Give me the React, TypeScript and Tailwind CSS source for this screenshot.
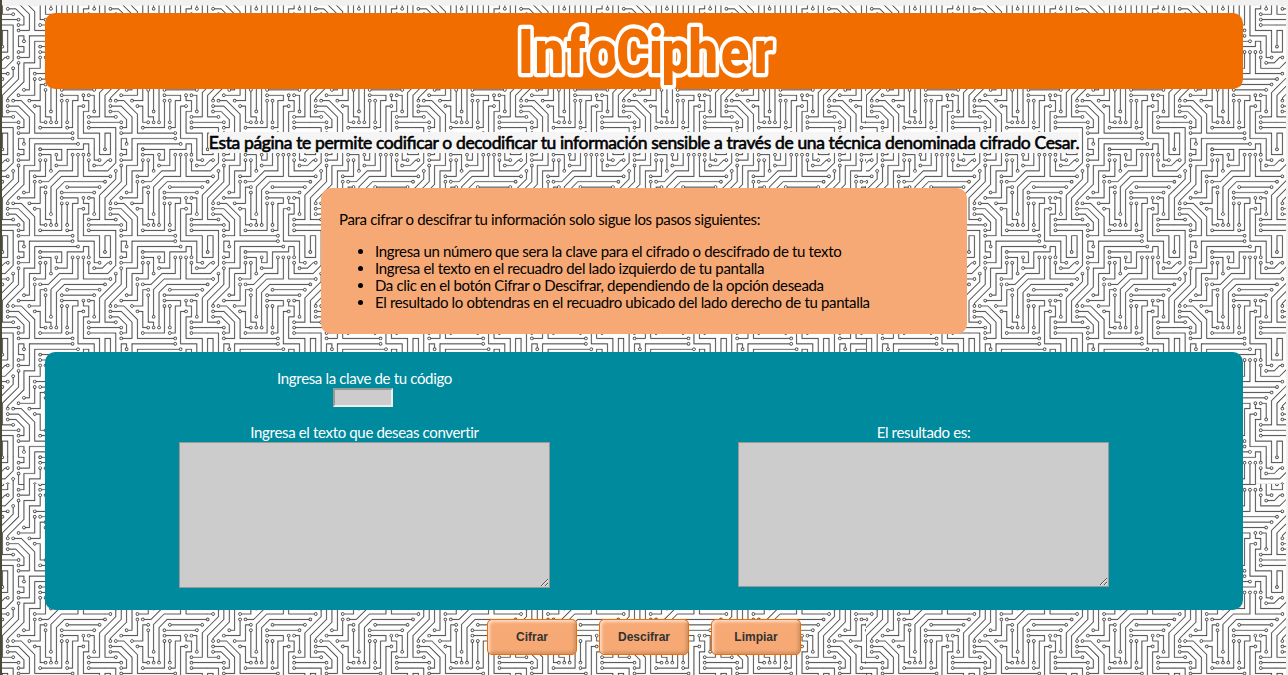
const TRACES = "M44.1 224a5 5 0 1 1 0 2H0v-2h44.1zm160 48a5 5 0 1 1 0 2H82v-2h122.1zm57.8-46a5 5 0 1 1 0-2H304v2h-42.1zm0 16a5 5 0 1 1 0-2H304v2h-42.1zm6.2-114a5 5 0 1 1 0 2h-86.2a5 5 0 1 1 0-2h86.2zm-256-48a5 5 0 1 1 0 2H0v-2h12.1zm185.8 34a5 5 0 1 1 0-2h86.2a5 5 0 1 1 0 2h-86.2zM258 12.1a5 5 0 1 1-2 0V0h2v12.1zm-64 208a5 5 0 1 1-2 0v-54.2a5 5 0 1 1 2 0v54.2zm48-198.2V80h62v2h-64V21.9a5 5 0 1 1 2 0zm16 16V64h46v2h-48V37.9a5 5 0 1 1 2 0zm-128 96V208h16v12.1a5 5 0 1 1-2 0V210h-16v-76.1a5 5 0 1 1 2 0zm-5.9-21.9a5 5 0 1 1 0 2H114v48H85.9a5 5 0 1 1 0-2H112v-48h12.1zm-6.2 130a5 5 0 1 1 0-2H176v-74.1a5 5 0 1 1 2 0V242h-60.1zm-16-64a5 5 0 1 1 0-2H114v48h10.1a5 5 0 1 1 0 2H112v-48h-10.1zM66 284.1a5 5 0 1 1-2 0V274H50v30h-2v-32h18v12.1zM236.1 176a5 5 0 1 1 0 2H226v94h48v32h-2v-30h-48v-98h12.1zm25.8-30a5 5 0 1 1 0-2H274v44.1a5 5 0 1 1-2 0V146h-10.1zm-64 96a5 5 0 1 1 0-2H208v-80h16v-14h-42.1a5 5 0 1 1 0-2H226v18h-16v80h-12.1zm86.2-210a5 5 0 1 1 0 2H272V0h2v32h10.1zM98 101.9V146H53.9a5 5 0 1 1 0-2H96v-42.1a5 5 0 1 1 2 0zM53.9 34a5 5 0 1 1 0-2H80V0h2v34H53.9zm60.1 3.9V66H82v64H69.9a5 5 0 1 1 0-2H80V64h32V37.9a5 5 0 1 1 2 0zM101.9 82a5 5 0 1 1 0-2H128V37.9a5 5 0 1 1 2 0V82h-28.1zm16-64a5 5 0 1 1 0-2H146v44.1a5 5 0 1 1-2 0V18h-26.1zm102.2 270a5 5 0 1 1 0 2H98v14h-2v-16h124.1zM242 149.9V160h16v34h-16v62h48v48h-2v-46h-48v-66h16v-30h-16v-12.1a5 5 0 1 1 2 0zM53.9 18a5 5 0 1 1 0-2H64V2H48V0h18v18H53.9zm112 32a5 5 0 1 1 0-2H192V0h50v2h-48v48h-28.1zm-48-48a5 5 0 0 1-9.8-2h2.07a3 3 0 1 0 5.66 0H178v34h-18V21.9a5 5 0 1 1 2 0V32h14V2h-58.1zm0 96a5 5 0 1 1 0-2H137l32-32h39V21.9a5 5 0 1 1 2 0V66h-40.17l-32 32H117.9zm28.1 90.1a5 5 0 1 1-2 0v-76.51L175.59 80H224V21.9a5 5 0 1 1 2 0V82h-49.59L146 112.41v75.69zm16 32a5 5 0 1 1-2 0v-99.51L184.59 96H300.1a5 5 0 0 1 3.9-3.9v2.07a3 3 0 0 0 0 5.66v2.07a5 5 0 0 1-3.9-3.9H185.41L162 121.41v98.69zm-144-64a5 5 0 1 1-2 0v-3.51l48-48V48h32V0h2v50H66v55.41l-48 48v2.69zM50 53.9v43.51l-48 48V208h26.1a5 5 0 1 1 0 2H0v-65.41l48-48V53.9a5 5 0 1 1 2 0zm-16 16V89.41l-34 34v-2.82l32-32V69.9a5 5 0 1 1 2 0zM12.1 32a5 5 0 1 1 0 2H9.41L0 43.41V40.6L8.59 32h3.51zm265.8 18a5 5 0 1 1 0-2h18.69l7.41-7.41v2.82L297.41 50H277.9zm-16 160a5 5 0 1 1 0-2H288v-71.41l16-16v2.82l-14 14V210h-28.1zm-208 32a5 5 0 1 1 0-2H64v-22.59L40.59 194H21.9a5 5 0 1 1 0-2H41.41L66 216.59V242H53.9zm150.2 14a5 5 0 1 1 0 2H96v-56.6L56.6 162H37.9a5 5 0 1 1 0-2h19.5L98 200.6V256h106.1zm-150.2 2a5 5 0 1 1 0-2H80v-46.59L48.59 178H21.9a5 5 0 1 1 0-2H49.41L82 208.59V258H53.9zM34 39.8v1.61L9.41 66H0v-2h8.59L32 40.59V0h2v39.8zM2 300.1a5 5 0 0 1 3.9 3.9H3.83A3 3 0 0 0 0 302.17V256h18v48h-2v-46H2v42.1zM34 241v63h-2v-62H0v-2h34v1zM17 18H0v-2h16V0h2v18h-1zm273-2h14v2h-16V0h2v16zm-32 273v15h-2v-14h-14v14h-2v-16h18v1zM0 92.1A5.02 5.02 0 0 1 6 97a5 5 0 0 1-6 4.9v-2.07a3 3 0 1 0 0-5.66V92.1zM80 272h2v32h-2v-32zm37.9 32h-2.07a3 3 0 0 0-5.66 0h-2.07a5 5 0 0 1 9.8 0zM5.9 0A5.02 5.02 0 0 1 0 5.9V3.83A3 3 0 0 0 3.83 0H5.9zm294.2 0h2.07A3 3 0 0 0 304 3.83V5.9a5 5 0 0 1-3.9-5.9zm3.9 300.1v2.07a3 3 0 0 0-1.83 1.83h-2.07a5 5 0 0 1 3.9-3.9z";

const PADS: [number, number][] = [
  [49, 225], [209, 273], [257, 225], [257, 241], [273, 129], [177, 129], [17, 81], [193, 113], [289, 113],
  [257, 17], [193, 225], [193, 161], [241, 17], [257, 33], [129, 129], [145, 225], [129, 113], [81, 161],
  [113, 241], [177, 161], [97, 177], [129, 225], [65, 289], [241, 177], [257, 145], [273, 193], [193, 241],
  [177, 145], [289, 33], [97, 97], [49, 145], [49, 33], [113, 33], [65, 129], [97, 81], [129, 33], [113, 17],
  [145, 65], [225, 289], [241, 145], [49, 17], [161, 49], [161, 17], [113, 97], [209, 17], [145, 193],
  [225, 17], [161, 225], [17, 161], [49, 49], [33, 209], [33, 65], [17, 33], [273, 49], [257, 209],
  [49, 241], [17, 193], [209, 257], [33, 161], [49, 257], [17, 177],
];

const SCALE = 0.3377;
const PERIOD = 304 * SCALE;

type Region = { id: string; x: number; y: number; w: number; h: number; originY: number };

const REGIONS: Region[] = [
  { id: "nw", x: 2, y: 5.5, w: 864, h: 478.5, originY: 46.3 - PERIOD },
  { id: "ne", x: 866, y: 5.5, w: 420, h: 478.5, originY: 46.3 - PERIOD },
  { id: "sw", x: 2, y: 484, w: 864, h: 191, originY: 484 },
  { id: "se", x: 866, y: 484, w: 420, h: 191, originY: 484 },
];

function CircuitRegion({ id, x, y, w, h, originY }: Region) {
  const cols = Math.ceil(w / PERIOD);
  const rows = Math.ceil((y + h - originY) / PERIOD);
  return (
    <g clipPath={`url(#clip-${id})`}>
      <clipPath id={`clip-${id}`}>
        <rect x={x} y={y} width={w} height={h} />
      </clipPath>
      <rect x={x} y={y} width={w} height={h} fill="#fefefe" />
      {Array.from({ length: cols * rows }, (_, i) => (
        <use
          key={i}
          href="#circuit"
          transform={`translate(${x + (i % cols) * PERIOD} ${originY + Math.floor(i / cols) * PERIOD}) scale(${SCALE})`}
        />
      ))}
    </g>
  );
}

function Backdrop() {
  return (
    <svg className="absolute inset-0 -z-10" width="1288" height="675" aria-hidden="true">
      <defs>
        <g id="circuit">
          <path d={TRACES} fill="#3a3a3a" stroke="#3a3a3a" strokeWidth="0.6" />
          {PADS.map(([cx, cy]) => (
            <circle key={`${cx}-${cy}`} cx={cx} cy={cy} r="3" fill="#fff" />
          ))}
        </g>
      </defs>
      <rect width="1288" height="675" fill="#f2f1f0" />
      {REGIONS.map((r) => (
        <CircuitRegion key={r.id} {...r} />
      ))}
      <rect width="2" height="675" fill="#4b4839" />
    </svg>
  );
}

function ActionButton({ label }: { label: string }) {
  return (
    <button className="h-9 w-[90px] rounded-[5px] border border-[#f26d00] bg-[#f6a975] font-['Liberation_Sans',sans-serif] text-[12px] font-bold tracking-normal text-[#333] shadow-[inset_2px_2px_3px_rgba(255,255,255,0.6),inset_-2px_-2px_3px_rgba(0,0,0,0.15)]">
      {label}
    </button>
  );
}

const steps = [
  "Ingresa un número que sera la clave para el cifrado o descifrado de tu texto",
  "Ingresa el texto en el recuadro del lado izquierdo de tu pantalla",
  "Da clic en el botón Cifrar o Descifrar, dependiendo de la opción deseada",
  "El resultado lo obtendras en el recuadro ubicado del lado derecho de tu pantalla",
];

export default function App() {
  return (
    <div className="relative isolate flex h-[675px] w-[1288px] flex-col items-center overflow-hidden pt-[13px] font-[Lato,sans-serif] text-[15px] leading-[17px] tracking-[-0.34px] text-black">
      <Backdrop />
      <header className="flex h-[76px] w-[1198px] shrink-0 justify-center rounded-[10px] bg-[#f26d00]">
        <h1 className="tracking-normal">
          <svg width="290" height="76" className="block overflow-visible">
            <text
              transform="scale(0.84 1)"
              x="32 60 92 124 160 187 211 243 281 315"
              y="60"
              textAnchor="middle"
              fontFamily="Roboto, sans-serif"
              fontWeight="900"
              fontSize="62"
              fill="#f26d00"
              stroke="#fff"
              strokeWidth="8.5"
              strokeLinejoin="round"
              paintOrder="stroke"
            >
              InfoCipher
            </text>
          </svg>
        </h1>
      </header>
      <h2 className="mt-[43px] h-[21px] shrink-0 bg-[#f5f5f5] text-[17.5px] leading-[21px] font-normal tracking-[-0.37px] whitespace-nowrap [-webkit-text-stroke:0.6px_black] [font-feature-settings:'liga'_1]">
        Esta página te permite codificar o decodificar tu información sensible a través de una técnica denominada cifrado Cesar.
      </h2>
      <section className="mt-[35px] h-[146px] w-[646px] shrink-0 rounded-[10px] bg-[#f6a975] px-[18px] pt-[23px]">
        <p>Para cifrar o descifrar tu información solo sigue los pasos siguientes:</p>
        <ul className="mt-[15px] list-disc pl-9">
          {steps.map((s) => <li key={s}>{s}</li>)}
        </ul>
      </section>
      <main className="mt-[18px] flex h-[258px] w-[1198px] shrink-0 rounded-[10px] bg-[#008a9e] pl-[40px] text-white">
        <div className="flex w-[559px] flex-col items-center pt-[18px]">
          <label htmlFor="key">Ingresa la clave de tu código</label>
          <input id="key" className="mt-px h-[19px] w-[60px] -translate-x-[2px] border-2 border-t-[#999] border-r-[#eee] border-b-[#eee] border-l-[#999] bg-[#ccc]" />
          <label htmlFor="source" className="mt-[17px]">Ingresa el texto que deseas convertir</label>
          <textarea id="source" className="mt-px h-[146px] w-[371px] resize border border-[#999] bg-[#ccc]" />
        </div>
        <div className="flex w-[559px] flex-col items-center pt-[72px]">
          <label htmlFor="result">El resultado es:</label>
          <textarea id="result" className="mt-px h-[145px] w-[371px] resize border border-[#999] bg-[#ccc]" />
        </div>
      </main>
      <div className="mt-[9px] flex gap-[22px]">
        <ActionButton label="Cifrar" />
        <ActionButton label="Descifrar" />
        <ActionButton label="Limpiar" />
      </div>
    </div>
  );
}
